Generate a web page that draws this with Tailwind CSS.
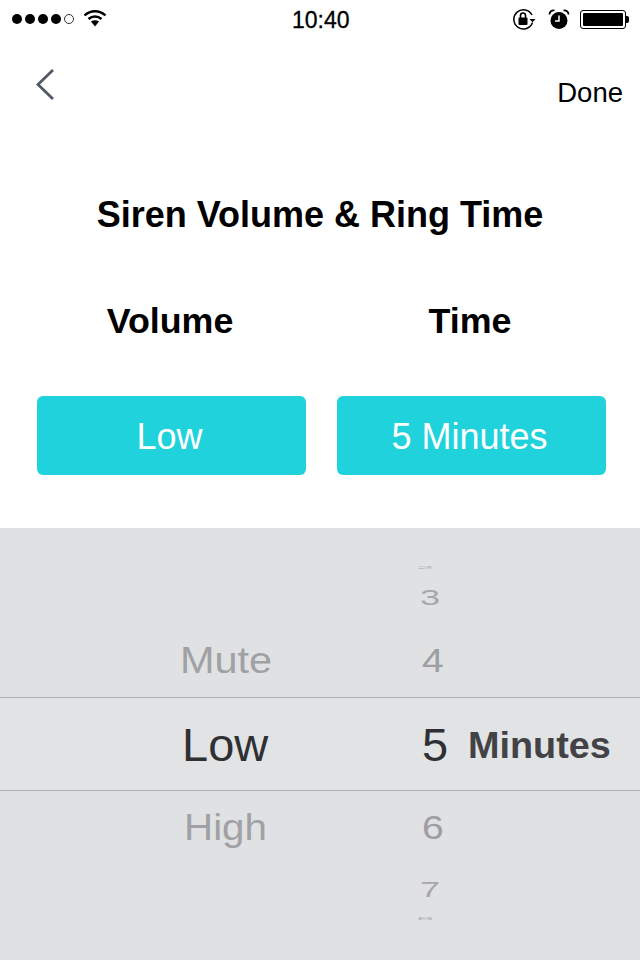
<!DOCTYPE html>
<html>
<head>
<meta charset="utf-8">
<script src="https://cdn.jsdelivr.net/npm/@tailwindcss/browser@4"></script>
</head>
<body class="m-0 bg-white">
<div class="w-[640px] h-[960px] flex flex-col overflow-hidden bg-white text-black font-['Liberation_Sans',Arial,sans-serif]">
  <!-- status bar -->
  <div class="h-[40px] shrink-0 relative flex items-center justify-between pl-[12px] pr-[11px]">
    <div class="flex items-center gap-[9px] -mt-[3px]">
      <div class="flex items-center gap-[3px]">
        <span class="w-[10px] h-[10px] rounded-full bg-black"></span>
        <span class="w-[10px] h-[10px] rounded-full bg-black"></span>
        <span class="w-[10px] h-[10px] rounded-full bg-black"></span>
        <span class="w-[10px] h-[10px] rounded-full bg-black"></span>
        <span class="w-[10px] h-[10px] rounded-full border border-[#333]"></span>
      </div>
      <svg width="24" height="18" viewBox="0 0 24 18" class="-mt-[2px]">
        <path d="M1.5 6.500C7.500 .8 16.500 .8 22.500 6.500" fill="none" stroke="#000" stroke-width="2.4"/>
        <path d="M5.500 10C9.200 6.600 14.800 6.600 18.500 10" fill="none" stroke="#000" stroke-width="2.4"/>
        <path d="M8 12.600L12 17.500L16 12.600C13.600 10.800 10.400 10.800 8 12.600Z" fill="#000"/>
      </svg>
    </div>
    <span class="absolute left-[292px] top-[7px] text-[23px] leading-[26px] [-webkit-text-stroke:0.3px_#000]">10:40</span>
    <div class="flex items-center -mt-[2px]">
      <svg width="24" height="22" viewBox="0 0 24 22" class="mr-[12px]">
        <path d="M20.500 14.500A9.600 9.600 0 1 1 20 7" fill="none" stroke="#000" stroke-width="1.5"/>
        <path d="M17.500 11h6l-3 3.200Z" fill="#000"/>
        <rect x="6.500" y="9.500" width="9" height="7.500" rx="1" fill="#000"/>
        <path d="M8.500 10V7.500a2.500 2.500 0 0 1 5 0V10" fill="none" stroke="#000" stroke-width="1.6"/>
      </svg>
      <svg width="22" height="22" viewBox="0 0 22 22" class="mr-[10px]">
        <circle cx="11" cy="12.500" r="8.500" fill="#000"/>
        <path d="M11 7.500V13H7" fill="none" stroke="#fff" stroke-width="1.5"/>
        <path d="M1.500 6.500A4 4 0 0 1 6.500 2.500M20.500 6.500A4 4 0 0 0 15.500 2.500" fill="none" stroke="#000" stroke-width="1.8"/>
      </svg>
      <div class="w-[46px] h-[19px] rounded-[3px] border border-black p-[2px]">
        <div class="w-full h-full bg-black rounded-[1px]"></div>
      </div>
      <div class="w-[3px] h-[7px] bg-black rounded-r-[2px]"></div>
    </div>
  </div>

  <!-- nav -->
  <div class="h-[88px] shrink-0 flex justify-between pl-[36px] pr-[17px]">
    <svg width="20" height="34" viewBox="0 0 20 34" class="mt-[28px]">
      <path d="M17 2L2 16.500L17 31" fill="none" stroke="#535866" stroke-width="2.800"/>
    </svg>
    <span class="mt-[38px] text-[27.500px] leading-[30px]">Done</span>
  </div>

  <!-- title -->
  <h1 class="mt-[65px] h-[44px] shrink-0 text-center text-[36px] leading-[44px] font-bold">Siren Volume &amp; Ring Time</h1>

  <!-- columns -->
  <div class="mt-[62px] grid grid-cols-[300px_300px] px-[20px] shrink-0 text-center">
    <div class="text-[35.800px] leading-[44px] font-bold">Volume</div>
    <div class="text-[35.800px] leading-[44px] font-bold">Time</div>
  </div>

  <!-- buttons -->
  <div class="mt-[53px] pl-[37px] flex gap-[31px] shrink-0">
    <div class="w-[269px] h-[79px] rounded-[6px] bg-[#1fd2dc] text-white flex items-center justify-center pr-[4px] pt-[2px] text-[36px]">Low</div>
    <div class="w-[269px] h-[79px] rounded-[6px] bg-[#1fd2dc] text-white flex items-center justify-center pr-[4px] pt-[2px] text-[36px]">5 Minutes</div>
  </div>

  <!-- picker -->
  <div class="mt-[53px] flex-1 bg-[#e0e1e3] flex flex-col">
    <div class="h-[169px] relative shrink-0">
      <span class="absolute left-[180px] top-[112px] origin-left scale-x-[1.12] text-[37px] leading-[42px] text-[#a0a1a4]">Mute</span>
      <span class="absolute left-[418px] top-[27px] origin-center scale-y-[0.12] scale-x-[1.2] text-[26px] leading-[26px] text-[#b0b1b4]">2</span>
      <span class="absolute left-[420px] top-[56px] origin-left scale-x-[1.25] scale-y-75 text-[29px] leading-[26px] text-[#a6a7aa]">3</span>
      <span class="absolute left-[422px] top-[113px] origin-left scale-x-[1.15] text-[34px] leading-[38px] text-[#9d9ea1]">4</span>
    </div>
    <div class="h-[94px] shrink-0 relative border-y border-[#aeafb1] bg-[#e2e3e5]">
      <span class="absolute left-[182px] top-[22px] text-[47px] leading-[50px] text-[#2f3033]">Low</span>
      <span class="absolute left-[422px] top-[22px] text-[47px] leading-[50px] text-[#2f3033]">5</span>
      <span class="absolute left-[468px] top-[25px] text-[37.800px] leading-[44px] font-bold text-[#424347]">Minutes</span>
    </div>
    <div class="flex-1 relative">
      <span class="absolute left-[184px] top-[16px] origin-left scale-x-[1.09] text-[37px] leading-[42px] text-[#a0a1a4]">High</span>
      <span class="absolute left-[422px] top-[17px] origin-left scale-x-[1.15] text-[34px] leading-[38px] text-[#9d9ea1]">6</span>
      <span class="absolute left-[420px] top-[85px] origin-left scale-x-[1.25] scale-y-75 text-[29px] leading-[26px] text-[#a6a7aa]">7</span>
      <span class="absolute left-[418px] top-[115px] origin-center scale-y-[0.12] scale-x-[1.2] text-[26px] leading-[26px] text-[#b0b1b4]">8</span>
    </div>
  </div>
</div>
</body>
</html>
